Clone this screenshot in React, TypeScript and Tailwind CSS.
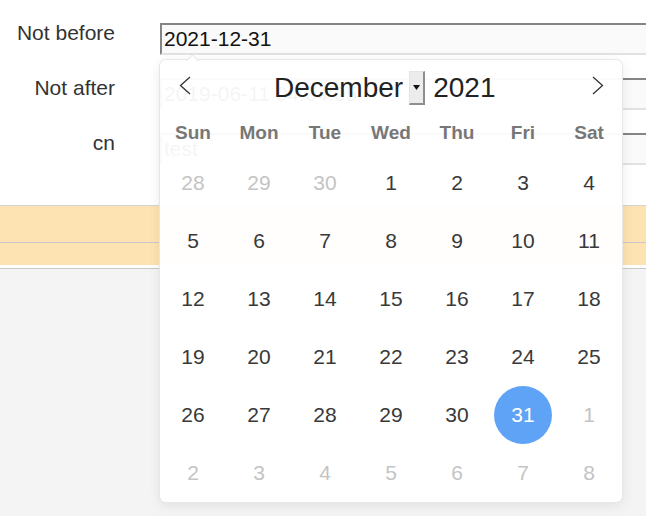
import React from 'react';

const weekdays = ['Sun', 'Mon', 'Tue', 'Wed', 'Thu', 'Fri', 'Sat'];

type Day = { n: number; muted?: boolean; selected?: boolean };

const buildDays = (): Day[] => {
  const days: Day[] = [28, 29, 30].map((n) => ({ n, muted: true }));
  for (let i = 1; i <= 31; i++) days.push({ n: i, selected: i === 31 });
  for (let i = 1; i <= 8; i++) days.push({ n: i, muted: true });
  return days;
};

const FieldRow: React.FC<{ label: string; value: string }> = ({ label, value }) => (
  <div className="flex items-start">
    <div className="flex-none w-[115px] -mt-[2px] whitespace-nowrap text-right text-[21px] leading-[24px] text-[#333]">{label}</div>
    <div className="ml-[45px] flex-none w-[520px] h-[32px] border-2 border-t-[#858585] border-l-[#858585] border-r-[#e2e2e2] border-b-[#e2e2e2] bg-[#fafafa] pl-[2px] pt-[2px] whitespace-nowrap text-[21px] leading-[24px] text-[#111]">
      {value}
    </div>
  </div>
);

const Calendar: React.FC = () => {
  const days = buildDays();
  return (
    <div className="absolute left-[160px] top-[60px] w-[462px] rounded-[6px] bg-[rgba(255,255,255,0.955)] shadow-[0_0_0_1px_#e6e6e6,0_3px_13px_rgba(0,0,0,0.09)]">
      <div className="absolute -top-[4px] left-[28px] w-[9px] h-[9px] rotate-45 border-t border-l border-[#e6e6e6] bg-white" />

      <div className="relative h-[56px] flex items-center pl-[114px] text-[28px] leading-[32px] text-[#222]">
        <svg className="absolute left-[19px] top-[16px]" width="12" height="19" viewBox="0 0 12 19">
          <polyline points="11,1 1.5,9.5 11,18" fill="none" stroke="#333" strokeWidth="1.3" />
        </svg>
        <span>December</span>
        <span className="ml-[6px] w-[16px] h-[34px] flex items-center justify-center border border-t-[#e4e4e4] border-l-[#e4e4e4] border-r-2 border-b-2 border-r-[#8e8e8e] border-b-[#8e8e8e] bg-[#ececec]">
          <svg width="7" height="5" viewBox="0 0 7 5">
            <polygon points="0,0 7,0 3.5,5" fill="#111" />
          </svg>
        </span>
        <span className="ml-[8px]">2021</span>
        <svg className="absolute left-[432px] top-[16px]" width="12" height="19" viewBox="0 0 12 19">
          <polyline points="1,1 10.5,9.5 1,18" fill="none" stroke="#333" strokeWidth="1.3" />
        </svg>
      </div>

      <div className="grid grid-cols-7 h-[38px] pb-[4px] items-center">
        {weekdays.map((w) => (
          <div key={w} className="text-center text-[19px] leading-[22px] font-bold text-[#777]">
            {w}
          </div>
        ))}
      </div>

      <div className="grid grid-cols-7">
        {days.map((d, i) => (
          <div key={i} className="h-[58px] flex items-center justify-center">
            <div
              className={`w-[58px] h-[58px] rounded-full flex items-center justify-center text-[21px] leading-[24px] ${
                d.selected ? 'bg-[#5fa3f6] text-white' : d.muted ? 'text-[#c4c4c4]' : 'text-[#393939]'
              }`}
            >
              {d.n}
            </div>
          </div>
        ))}
      </div>
    </div>
  );
};

export default function App() {
  return (
    <div className="relative w-[646px] h-[516px] overflow-hidden bg-[#f4f4f4] font-['Liberation_Sans',Arial,sans-serif]">
      <div className="bg-white pt-[23px] h-[205px] flex flex-col gap-[23px]">
        <FieldRow label="Not before" value="2021-12-31" />
        <FieldRow label="Not after" value="2019-06-11 04:04:05" />
        <FieldRow label="cn" value="test" />
      </div>
      <div className="border-t border-[#d4d4d4] bg-[#fde3b1] h-[37px]" />
      <div className="border-t border-[#c8c8c8] bg-[#fde3b1] h-[23px]" />
      <div className="bg-white h-[3px] border-b border-[#c8c8c8] box-content" />

      <Calendar />
    </div>
  );
}
